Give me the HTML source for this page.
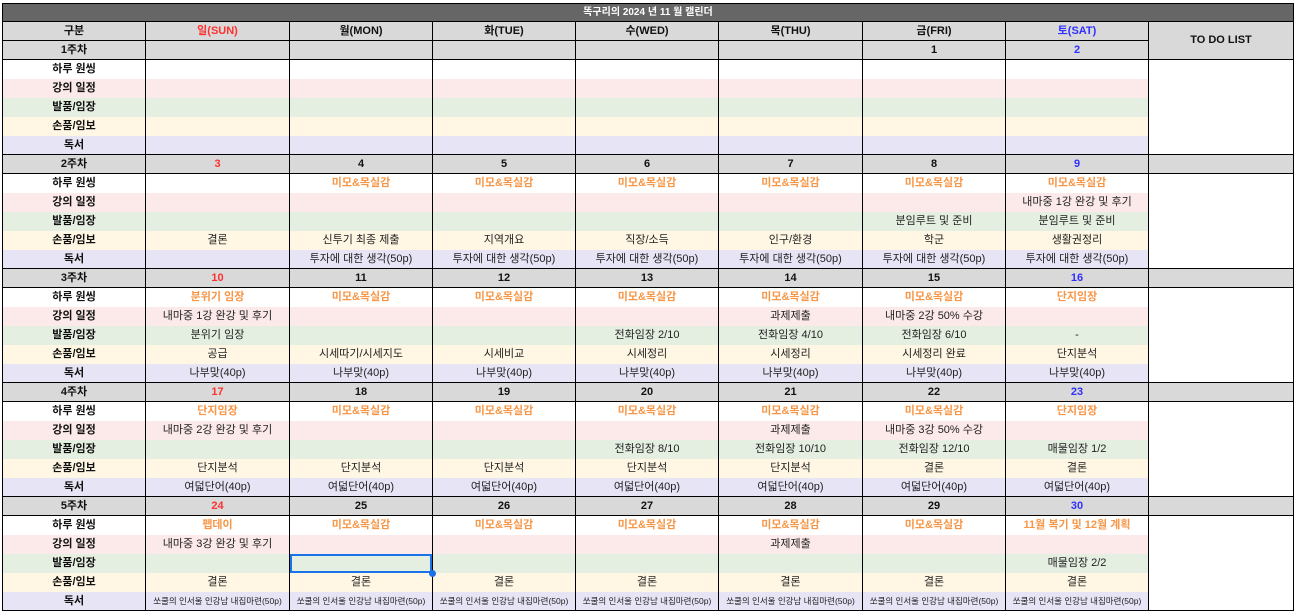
<!DOCTYPE html>
<html><head><meta charset="utf-8"><style>
body{margin:0;background:#fff;width:1296px;height:613px;overflow:hidden;font-family:"Liberation Sans","Noto Sans CJK KR",sans-serif;}
table{position:absolute;left:2px;top:3px;border-collapse:collapse;table-layout:fixed;border:1px solid #000;}
td{height:19px;padding:0;text-align:center;font-size:11px;color:#222;border-left:1px solid #000;border-right:1px solid #000;white-space:nowrap;overflow:hidden;line-height:18px;box-sizing:border-box;}
tr.t td{background:#666;color:#fff;font-weight:bold;font-size:10px;height:18px;line-height:16px;border:1px solid #000;}
tr.h td,tr.w td{background:#d9d9d9;font-weight:bold;border-top:1px solid #000;border-bottom:1px solid #000;color:#111;height:19px;line-height:17px;}
tr.a td{background:#fff}tr.b td{background:#fce9e9}tr.c td{background:#e5efe1}tr.d td{background:#fff7e3}tr.e td{background:#e7e4f5}
td.l{font-weight:bold;color:#111}
td.x{background:#fff!important}
td.tl{background:#d9d9d9!important;font-weight:bold;color:#111;border-bottom:1px solid #000;}
.r{color:#ff3030!important}.bl{color:#3030ff!important}
.o{color:#f79646;font-weight:bold}
.s{font-size:8.5px}
td.sel{box-shadow:inset 0 0 0 2px #1a73e8;position:relative}
.dot{position:absolute;right:-4px;bottom:-4px;width:7px;height:7px;border-radius:50%;background:#1a73e8}
</style></head><body>
<table>
<colgroup><col style="width:143px"><col style="width:144px"><col style="width:143px"><col style="width:143px"><col style="width:143px"><col style="width:144px"><col style="width:143px"><col style="width:143px"><col style="width:145px"></colgroup>
<tr class="t"><td colspan="9">똑구리의 2024 년 11 월 캘린더</td></tr>
<tr class="h"><td>구분</td><td class="r">일(SUN)</td><td>월(MON)</td><td>화(TUE)</td><td>수(WED)</td><td>목(THU)</td><td>금(FRI)</td><td class="bl">토(SAT)</td><td rowspan="2" class="tl">TO DO LIST</td></tr>
<tr class="w"><td>1주차</td><td></td><td></td><td></td><td></td><td></td><td>1</td><td class="bl">2</td></tr>
<tr class="a"><td class="l">하루 원씽</td><td></td><td></td><td></td><td></td><td></td><td></td><td></td><td rowspan="5" class="x"></td></tr>
<tr class="b"><td class="l">강의 일정</td><td></td><td></td><td></td><td></td><td></td><td></td><td></td></tr>
<tr class="c"><td class="l">발품/임장</td><td></td><td></td><td></td><td></td><td></td><td></td><td></td></tr>
<tr class="d"><td class="l">손품/임보</td><td></td><td></td><td></td><td></td><td></td><td></td><td></td></tr>
<tr class="e"><td class="l">독서</td><td></td><td></td><td></td><td></td><td></td><td></td><td></td></tr>

<tr class="w"><td>2주차</td><td class="r">3</td><td>4</td><td>5</td><td>6</td><td>7</td><td>8</td><td class="bl">9</td><td></td></tr>
<tr class="a"><td class="l">하루 원씽</td><td></td><td class="o">미모&amp;목실감</td><td class="o">미모&amp;목실감</td><td class="o">미모&amp;목실감</td><td class="o">미모&amp;목실감</td><td class="o">미모&amp;목실감</td><td class="o">미모&amp;목실감</td><td rowspan="5" class="x"></td></tr>
<tr class="b"><td class="l">강의 일정</td><td></td><td></td><td></td><td></td><td></td><td></td><td>내마중 1강 완강 및 후기</td></tr>
<tr class="c"><td class="l">발품/임장</td><td></td><td></td><td></td><td></td><td></td><td>분임루트 및 준비</td><td>분임루트 및 준비</td></tr>
<tr class="d"><td class="l">손품/임보</td><td>결론</td><td>신투기 최종 제출</td><td>지역개요</td><td>직장/소득</td><td>인구/환경</td><td>학군</td><td>생활권정리</td></tr>
<tr class="e"><td class="l">독서</td><td></td><td>투자에 대한 생각(50p)</td><td>투자에 대한 생각(50p)</td><td>투자에 대한 생각(50p)</td><td>투자에 대한 생각(50p)</td><td>투자에 대한 생각(50p)</td><td>투자에 대한 생각(50p)</td></tr>

<tr class="w"><td>3주차</td><td class="r">10</td><td>11</td><td>12</td><td>13</td><td>14</td><td>15</td><td class="bl">16</td><td></td></tr>
<tr class="a"><td class="l">하루 원씽</td><td class="o">분위기 임장</td><td class="o">미모&amp;목실감</td><td class="o">미모&amp;목실감</td><td class="o">미모&amp;목실감</td><td class="o">미모&amp;목실감</td><td class="o">미모&amp;목실감</td><td class="o">단지임장</td><td rowspan="5" class="x"></td></tr>
<tr class="b"><td class="l">강의 일정</td><td>내마중 1강 완강 및 후기</td><td></td><td></td><td></td><td>과제제출</td><td>내마중 2강 50% 수강</td><td></td></tr>
<tr class="c"><td class="l">발품/임장</td><td>분위기 임장</td><td></td><td></td><td>전화임장 2/10</td><td>전화임장 4/10</td><td>전화임장 6/10</td><td>-</td></tr>
<tr class="d"><td class="l">손품/임보</td><td>공급</td><td>시세따기/시세지도</td><td>시세비교</td><td>시세정리</td><td>시세정리</td><td>시세정리 완료</td><td>단지분석</td></tr>
<tr class="e"><td class="l">독서</td><td>나부맞(40p)</td><td>나부맞(40p)</td><td>나부맞(40p)</td><td>나부맞(40p)</td><td>나부맞(40p)</td><td>나부맞(40p)</td><td>나부맞(40p)</td></tr>

<tr class="w"><td>4주차</td><td class="r">17</td><td>18</td><td>19</td><td>20</td><td>21</td><td>22</td><td class="bl">23</td><td></td></tr>
<tr class="a"><td class="l">하루 원씽</td><td class="o">단지임장</td><td class="o">미모&amp;목실감</td><td class="o">미모&amp;목실감</td><td class="o">미모&amp;목실감</td><td class="o">미모&amp;목실감</td><td class="o">미모&amp;목실감</td><td class="o">단지임장</td><td rowspan="5" class="x"></td></tr>
<tr class="b"><td class="l">강의 일정</td><td>내마중 2강 완강 및 후기</td><td></td><td></td><td></td><td>과제제출</td><td>내마중 3강 50% 수강</td><td></td></tr>
<tr class="c"><td class="l">발품/임장</td><td></td><td></td><td></td><td>전화임장 8/10</td><td>전화임장 10/10</td><td>전화임장 12/10</td><td>매물임장 1/2</td></tr>
<tr class="d"><td class="l">손품/임보</td><td>단지분석</td><td>단지분석</td><td>단지분석</td><td>단지분석</td><td>단지분석</td><td>결론</td><td>결론</td></tr>
<tr class="e"><td class="l">독서</td><td>여덟단어(40p)</td><td>여덟단어(40p)</td><td>여덟단어(40p)</td><td>여덟단어(40p)</td><td>여덟단어(40p)</td><td>여덟단어(40p)</td><td>여덟단어(40p)</td></tr>

<tr class="w"><td>5주차</td><td class="r">24</td><td>25</td><td>26</td><td>27</td><td>28</td><td>29</td><td class="bl">30</td><td></td></tr>
<tr class="a"><td class="l">하루 원씽</td><td class="o">펩데이</td><td class="o">미모&amp;목실감</td><td class="o">미모&amp;목실감</td><td class="o">미모&amp;목실감</td><td class="o">미모&amp;목실감</td><td class="o">미모&amp;목실감</td><td class="o">11월 복기 및 12월 계획</td><td rowspan="5" class="x"></td></tr>
<tr class="b"><td class="l">강의 일정</td><td>내마중 3강 완강 및 후기</td><td></td><td></td><td></td><td>과제제출</td><td></td><td></td></tr>
<tr class="c"><td class="l">발품/임장</td><td></td><td class="sel" style="overflow:visible"><span class="dot"></span></td><td></td><td></td><td></td><td></td><td>매물임장 2/2</td></tr>
<tr class="d"><td class="l">손품/임보</td><td>결론</td><td>결론</td><td>결론</td><td>결론</td><td>결론</td><td>결론</td><td>결론</td></tr>
<tr class="e"><td class="l">독서</td><td class="s">쏘쿨의 인서울 인강남 내집마련(50p)</td><td class="s">쏘쿨의 인서울 인강남 내집마련(50p)</td><td class="s">쏘쿨의 인서울 인강남 내집마련(50p)</td><td class="s">쏘쿨의 인서울 인강남 내집마련(50p)</td><td class="s">쏘쿨의 인서울 인강남 내집마련(50p)</td><td class="s">쏘쿨의 인서울 인강남 내집마련(50p)</td><td class="s">쏘쿨의 인서울 인강남 내집마련(50p)</td></tr>
</table>
</body></html>
